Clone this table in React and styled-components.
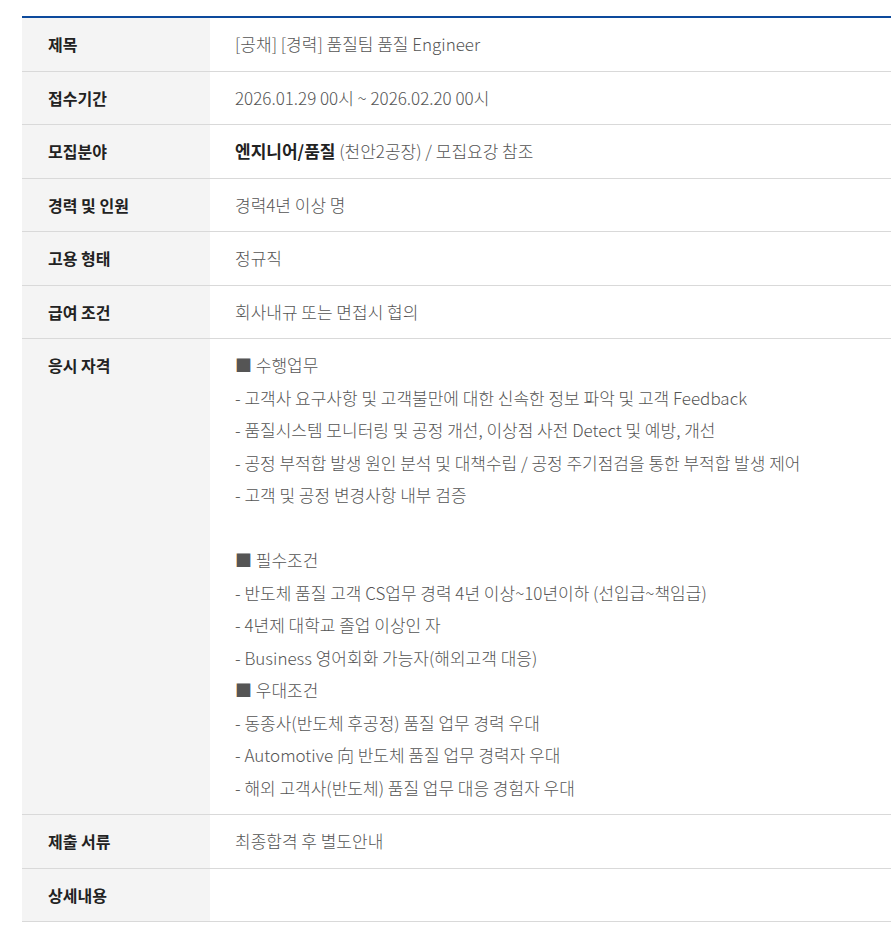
import React from "react"
import styled, { createGlobalStyle } from "styled-components"

const GlobalStyle = createGlobalStyle`
  body {
    margin: 0;
    background: #fff;
    font-family: "Noto Sans CJK KR", "Noto Sans", sans-serif;
  }
`

const rows = [
  { label: "제목", value: "[공채] [경력] 품질팀 품질 Engineer" },
  { label: "접수기간", value: "2026.01.29 00시 ~ 2026.02.20 00시" },
  {
    label: "모집분야",
    value: (
      <>
        <Strong>엔지니어/품질</Strong> (천안2공장) / 모집요강 참조
      </>
    ),
  },
  { label: "경력 및 인원", value: "경력4년 이상 명" },
  { label: "고용 형태", value: "정규직" },
  { label: "급여 조건", value: "회사내규 또는 면접시 협의" },
  {
    label: "응시 자격",
    lines: [
      "■ 수행업무",
      "- 고객사 요구사항 및 고객불만에 대한 신속한 정보 파악 및 고객 Feedback",
      "- 품질시스템 모니터링 및 공정 개선, 이상점 사전 Detect 및 예방, 개선",
      "- 공정 부적합 발생 원인 분석 및 대책수립 / 공정 주기점검을 통한 부적합 발생 제어",
      "- 고객 및 공정 변경사항 내부 검증",
      "",
      "■ 필수조건",
      "- 반도체 품질 고객 CS업무 경력 4년 이상~10년이하 (선입급~책임급)",
      "- 4년제 대학교 졸업 이상인 자",
      "- Business 영어회화 가능자(해외고객 대응)",
      "■ 우대조건",
      "- 동종사(반도체 후공정) 품질 업무 경력 우대",
      "- Automotive 向 반도체 품질 업무 경력자 우대",
      "- 해외 고객사(반도체) 품질 업무 대응 경험자 우대",
    ],
  },
  { label: "제출 서류", value: "최종합격 후 별도안내" },
  { label: "상세내용", value: "" },
]

export default function App() {
  return (
    <>
      <GlobalStyle />
      <Page>
        <Table>
          <tbody>
            {rows.map((row) => (
              <tr key={row.label}>
                <Th>{row.label}</Th>
                <Td>
                  {row.lines
                    ? row.lines.map((line, i) => <Line key={i}>{line || "\u00a0"}</Line>)
                    : row.value}
                </Td>
              </tr>
            ))}
          </tbody>
        </Table>
      </Page>
    </>
  )
}

function Strong({ children }) {
  return <Bold>{children}</Bold>
}

const Page = styled.div`
  padding: 16px 0 0 22px;
`

const Table = styled.table`
  width: 869px;
  border-collapse: collapse;
  border-top: 2px solid #0d4a9c;
  table-layout: fixed;
`

const Th = styled.th`
  width: 188px;
  box-sizing: border-box;
  background: #f4f4f4;
  text-align: left;
  vertical-align: top;
  padding: 10px 26px;
  font-size: 16px;
  line-height: 32.5px;
  font-weight: 700;
  color: #222;
  border-bottom: 1px solid #d9d9d9;
`

const Td = styled.td`
  padding: 10px 25px;
  font-size: 17px;
  line-height: 32.5px;
  font-weight: 300;
  color: #555;
  vertical-align: top;
  border-bottom: 1px solid #d9d9d9;
`

const Line = styled.div`
  min-height: 32.5px;
`

const Bold = styled.b`
  font-weight: 700;
  color: #222;
`
